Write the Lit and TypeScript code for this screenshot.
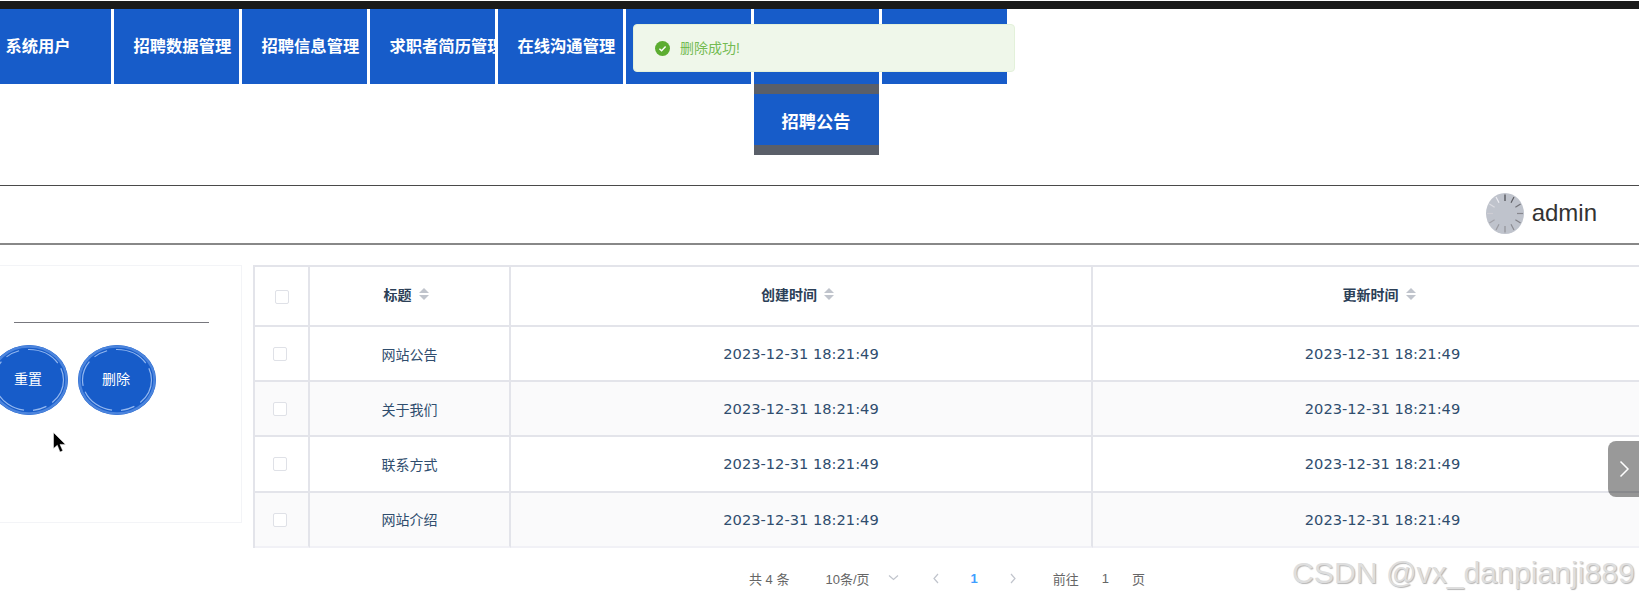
import { LitElement, html, css, svg } from 'lit'
import { customElement } from 'lit/decorators.js'

const NAV = ['系统用户', '招聘数据管理', '招聘信息管理', '求职者简历管理', '在线沟通管理', '', '', '']
const ROWS = ['网站公告', '关于我们', '联系方式', '网站介绍']
const STAMP = '2023-12-31 18:21:49'

// Loading spinner in the avatar slot: ticks fade clockwise from the top.
const spinnerTicks = () =>
  Array.from({ length: 12 }, (_, i) => {
    const a = (i * Math.PI) / 6
    const shade = i < 4 ? 70 + i * 22 : i < 9 ? 130 + (i - 4) * 8 : 205 + (i - 9) * 16
    return svg`<line x1=${19 + Math.sin(a) * 12} y1=${20.5 - Math.cos(a) * 12.5} x2=${19 + Math.sin(a) * 18} y2=${20.5 - Math.cos(a) * 19}
      stroke="rgb(${shade},${shade},${shade + 6})" stroke-width="1.2" />`
  })

@customElement('app-root')
export class AppRoot extends LitElement {
  static styles = css`
    :host {
      display: block;
      position: relative;
      width: 1639px;
      height: 601px;
      overflow: hidden;
      background: #fff;
      font-family: 'Liberation Sans', 'Noto Sans CJK SC', sans-serif;
      color: #333;
    }

    .topbar {
      height: 8px;
      margin-top: 1px;
      background: #1a1a1a;
    }

    .nav {
      display: flex;
      gap: 3px;
      height: 75px;
      margin-left: -14.5px;
      margin-bottom: 101px;
    }
    .nav-item {
      position: relative;
      flex: none;
      width: 125px;
      background: #175cc9;
      color: #fff;
      font-size: 16.3px;
      font-weight: 700;
      line-height: 75px;
    }
    .nav-label {
      display: block;
      height: 75px;
      padding-left: 20px;
      box-sizing: border-box;
      overflow: hidden;
      white-space: nowrap;
    }
    .submenu {
      position: absolute;
      top: 100%;
      left: 0;
      width: 125px;
      padding: 10px 0;
      background: #5a5f69;
    }
    .submenu-item {
      width: 125px;
      height: 51px;
      background: #175cc9;
      font-size: 17.2px;
      line-height: 57px;
      text-align: center;
    }

    .toast {
      position: absolute;
      left: 633px;
      top: 24px;
      width: 382px;
      height: 48px;
      box-sizing: border-box;
      display: flex;
      align-items: center;
      gap: 10px;
      padding-left: 21px;
      background: #eff7ea;
      border: 1px solid #e3f1da;
      border-radius: 4px;
      color: #74bb52;
      font-size: 14px;
      line-height: 44px;
    }

    .userbar {
      height: 57px;
      display: flex;
      align-items: flex-start;
      justify-content: flex-end;
      gap: 8px;
      padding-right: 42px;
      border-top: 1px solid #4a4a4a;
      border-bottom: 2px solid #888;
      font-size: 24px;
      line-height: 54px;
      color: #333;
    }
    .avatar {
      display: block;
      margin-top: 7px;
    }

    .main {
      display: flex;
      align-items: flex-start;
      gap: 11px;
      margin-top: 20px;
      margin-left: -30px;
    }

    .card {
      flex: none;
      width: 272px;
      height: 258px;
      box-sizing: border-box;
      border: 1px solid #f3f4f7;
      padding: 56px 0 0 19px;
    }
    .field {
      width: 195px;
      height: 1px;
      margin-left: 24px;
      background: #77777d;
    }
    .actions {
      display: flex;
      gap: 10px;
      margin-top: 22px;
    }
    .round {
      position: relative;
      width: 78px;
      height: 70px;
      display: flex;
      align-items: center;
      justify-content: center;
      padding-bottom: 4px;
      box-sizing: border-box;
      background: #175cc9;
      border-radius: 50%;
      color: #fff;
      font-size: 14px;
    }
    .round span {
      margin-left: -2px;
    }
    .round svg {
      position: absolute;
      inset: 0;
    }

    table {
      flex: none;
      width: 1419px;
      table-layout: fixed;
      border-collapse: separate;
      border-spacing: 0;
      border-top: 2px solid #e3e4ea;
      border-left: 2px solid #e3e4ea;
      color: #2f4d6e;
      font-size: 14px;
    }
    th,
    td {
      box-sizing: border-box;
      padding: 0;
      text-align: center;
      border-right: 2px solid #e3e4ea;
      border-bottom: 2px solid #e3e4ea;
    }
    th {
      height: 60px;
      font-weight: 700;
      color: #2c4057;
    }
    td {
      height: 55.2px;
    }
    tr.odd td {
      background: #fafafb;
    }
    tr:last-child td {
      border-bottom-color: #f1f1f6;
    }
    .stamp {
      font-family: 'DejaVu Sans', sans-serif;
      font-size: 14.65px;
    }
    .head {
      display: inline-flex;
      align-items: center;
      margin-bottom: 5px;
    }
    .sort {
      display: flex;
      flex-direction: column;
      align-items: center;
      gap: 2px;
      width: 24px;
    }
    .sort i {
      width: 0;
      height: 0;
      border: solid transparent;
      border-width: 0 5px;
    }
    .sort .up {
      border-bottom: 5px solid #c0c4cc;
    }
    .sort .down {
      border-top: 5px solid #c0c4cc;
    }
    .check {
      display: block;
      width: 14px;
      height: 14px;
      box-sizing: border-box;
      margin: 1px 0 0 18px;
      border: 1px solid #dfe1e7;
      border-radius: 2px;
      background: #fff;
    }
    th .check {
      margin: 2px 0 0 20px;
    }

    .pager {
      display: flex;
      align-items: center;
      height: 38px;
      margin-top: 12px;
      padding-left: 749px;
      color: #666;
      font-size: 13px;
    }
    .pager svg {
      display: block;
    }
    .current {
      color: #409eff;
      font-weight: 700;
    }

    .edge-tab {
      position: absolute;
      right: 0;
      top: 441px;
      width: 31px;
      height: 56px;
      display: flex;
      align-items: center;
      padding-left: 11px;
      box-sizing: border-box;
      background: rgba(0, 0, 0, 0.4);
      border-radius: 8px 0 0 8px;
    }

    .cursor {
      position: absolute;
      left: 53px;
      top: 432px;
    }

    .watermark {
      position: absolute;
      left: 1292px;
      top: 555px;
      font-size: 30.2px;
      line-height: 36px;
      white-space: nowrap;
      color: #dedede;
      text-shadow: 1px 1px 1px #b5b5b5;
    }
  `

  private sortIcon() {
    return html`<span class="sort"><i class="up"></i><i class="down"></i></span>`
  }

  private rings() {
    return html`<svg width="78" height="70" viewBox="0 0 78 70" fill="none">
      <ellipse cx="39" cy="35" rx="37.5" ry="33.5" stroke="#4b84dd" stroke-width="2.5" />
      <ellipse cx="39" cy="35" rx="34.5" ry="30.5" stroke="#93b7ef" stroke-width="1.2" stroke-dasharray="26 7 14 9 34 6" />
    </svg>`
  }

  private chevron(dir: 'left' | 'right' | 'down', color = '#c0c4cc') {
    const d = dir === 'left' ? 'M7 2 3 6.5 7 11' : dir === 'right' ? 'M3 2 7 6.5 3 11' : 'M1 3.5 5.5 7.5 10 3.5'
    const w = dir === 'down' ? 11 : 10
    return html`<svg width=${w} height="13" fill="none"><path d=${d} stroke=${color} stroke-width="1.2" /></svg>`
  }

  render() {
    return html`
      <div class="topbar"></div>
      <nav class="nav">
        ${NAV.map(
          (label, i) => html`
            <div class="nav-item">
              <span class="nav-label">${label}</span>
              ${i === 6 ? html`<div class="submenu"><div class="submenu-item">招聘公告</div></div>` : ''}
            </div>
          `,
        )}
      </nav>

      <div class="userbar">
        <svg class="avatar" width="38" height="41" viewBox="0 0 38 41">
          <ellipse cx="19" cy="20.5" rx="19" ry="20.5" fill="#bfc3cc" />
          ${spinnerTicks()}
        </svg>
        <span>admin</span>
      </div>

      <div class="main">
        <div class="card">
          <div class="field"></div>
          <div class="actions">
            <div class="round">${this.rings()}<span>重置</span></div>
            <div class="round">${this.rings()}<span>删除</span></div>
          </div>
        </div>
        <table>
          <colgroup>
            <col style="width: 55px" />
            <col style="width: 201px" />
            <col style="width: 582px" />
            <col style="width: 581px" />
          </colgroup>
          <thead>
            <tr>
              <th><span class="check"></span></th>
              <th><span class="head">标题${this.sortIcon()}</span></th>
              <th><span class="head">创建时间${this.sortIcon()}</span></th>
              <th><span class="head">更新时间${this.sortIcon()}</span></th>
            </tr>
          </thead>
          <tbody>
            ${ROWS.map(
              (title, i) => html`
                <tr class=${i % 2 ? 'odd' : ''}>
                  <td><span class="check"></span></td>
                  <td>${title}</td>
                  <td class="stamp">${STAMP}</td>
                  <td class="stamp">${STAMP}</td>
                </tr>
              `,
            )}
          </tbody>
        </table>
      </div>

      <div class="pager">
        <span>共 4 条</span>
        <span style="margin-left: 36px">10条/页</span>
        <span style="margin-left: 18px">${this.chevron('down')}</span>
        <span style="margin-left: 32px">${this.chevron('left')}</span>
        <span class="current" style="margin-left: 30px">1</span>
        <span style="margin-left: 30px">${this.chevron('right')}</span>
        <span style="margin-left: 35px">前往</span>
        <span style="margin-left: 23px">1</span>
        <span style="margin-left: 23px">页</span>
      </div>

      <div class="toast">
        <svg width="15" height="15" viewBox="0 0 15 15">
          <circle cx="7.5" cy="7.5" r="7.5" fill="#5cad31" />
          <path d="M4.4 7.7 6.6 9.8 10.6 5.6" fill="none" stroke="#fff" stroke-width="1.4" />
        </svg>
        <span>删除成功!</span>
      </div>

      <div class="edge-tab">
        <svg width="11" height="18" fill="none"><path d="M1.5 1.5 9 9l-7.5 7.5" stroke="#fff" stroke-width="1.5" /></svg>
      </div>

      <svg class="cursor" width="14" height="21" viewBox="0 0 14 21">
        <path d="M0.5 0.5V16.5L4.3 13.2 7 20 9.8 18.8 7 12.4H12.5Z" fill="#000" stroke="#fff" stroke-width="0.5" />
      </svg>

      <div class="watermark">CSDN @vx_danpianji889</div>
    `
  }
}
